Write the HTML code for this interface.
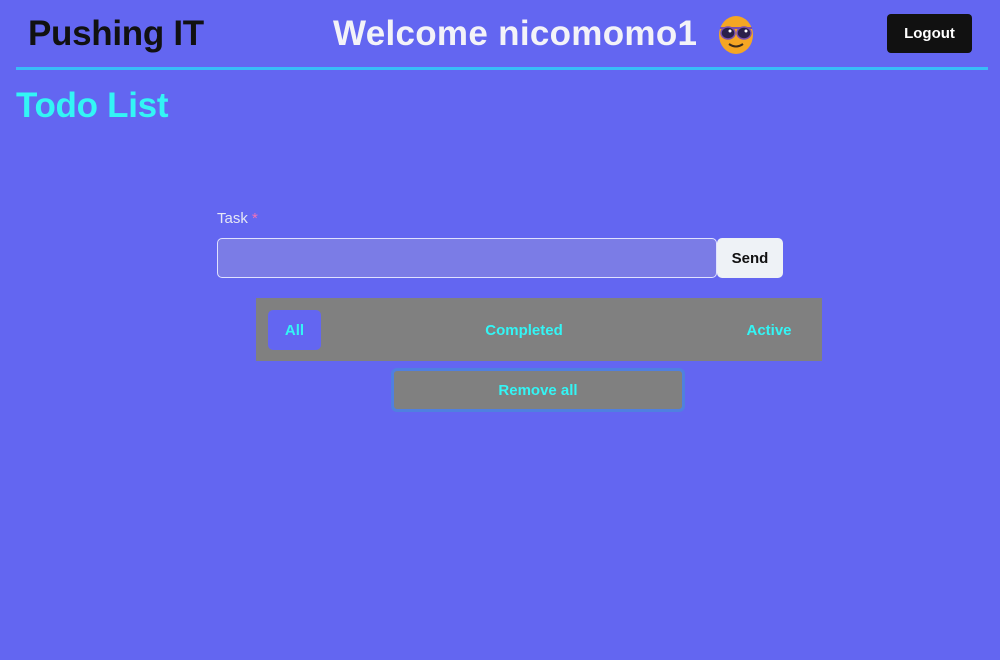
<!DOCTYPE html>
<html><head><meta charset="utf-8"><style>
*{margin:0;padding:0;box-sizing:border-box}
body{width:1000px;height:660px;background:#6366f1;font-family:"Liberation Sans",sans-serif;position:relative;overflow:hidden}
.a{position:absolute;white-space:nowrap}
</style></head><body>
<div class="a" style="left:28px;top:14px;font-size:35px;font-weight:bold;color:#111;letter-spacing:-0.3px">Pushing IT</div>
<div class="a" style="left:333px;top:14px;font-size:35px;font-weight:bold;color:#f3f3f8;letter-spacing:0.3px">Welcome nicomomo1</div>
<svg class="a" style="left:716px;top:15px" width="40" height="40" viewBox="0 0 40 40">
<ellipse cx="20" cy="20" rx="17" ry="19" fill="#f5a623"/>
<path d="M4 13 L36 13" stroke="#7a4fb0" stroke-width="2"/>
<ellipse cx="12" cy="18" rx="7" ry="6" fill="#2a1f4a" stroke="#7a4fb0" stroke-width="1.5"/>
<ellipse cx="28" cy="18" rx="7" ry="6" fill="#2a1f4a" stroke="#7a4fb0" stroke-width="1.5"/>
<circle cx="14" cy="16" r="1.5" fill="#fff"/><circle cx="30" cy="16" r="1.5" fill="#fff"/>
<path d="M13 29 Q20 34 27 29" stroke="#3a2a1a" stroke-width="2" fill="none"/>
</svg>
<div class="a" style="left:887px;top:14px;width:85px;height:39px;background:#111;border-radius:4px;color:#fff;font-weight:bold;font-size:15px;line-height:39px;text-align:center">Logout</div>
<div class="a" style="left:16px;top:67px;width:972px;height:3px;background:#38bdf8"></div>
<div class="a" style="left:16px;top:86px;font-size:35px;font-weight:bold;color:#33f5f5;letter-spacing:-0.3px">Todo List</div>
<div class="a" style="left:217px;top:210px;font-size:15px;color:#e5e7f5">Task <span style="color:#f472b6">*</span></div>
<div class="a" style="left:217px;top:238px;width:500px;height:40px;background:#7b7ce6;border:1px solid #e0e2ff;border-radius:5px"></div>
<div class="a" style="left:717px;top:238px;width:66px;height:40px;background:#eef2f6;border-radius:5px;font-weight:bold;font-size:15px;line-height:41px;text-align:center;color:#111">Send</div>
<div class="a" style="left:256px;top:298px;width:566px;height:63px;background:#808080"></div>
<div class="a" style="left:268px;top:310px;width:53px;height:40px;background:#6366f1;border-radius:5px;color:#33f5f5;font-weight:bold;font-size:15px;line-height:41px;text-align:center">All</div>
<div class="a" style="left:474px;top:322px;width:100px;text-align:center;color:#33f5f5;font-weight:bold;font-size:15px">Completed</div>
<div class="a" style="left:729px;top:322px;width:80px;text-align:center;color:#33f5f5;font-weight:bold;font-size:15px">Active</div>
<div class="a" style="left:391px;top:368px;width:294px;height:44px;background:#808080;border:3px solid #4f80e0;border-radius:6px;color:#33f5f5;font-weight:bold;font-size:15px;line-height:40px;text-align:center">Remove all</div>
</body></html>
